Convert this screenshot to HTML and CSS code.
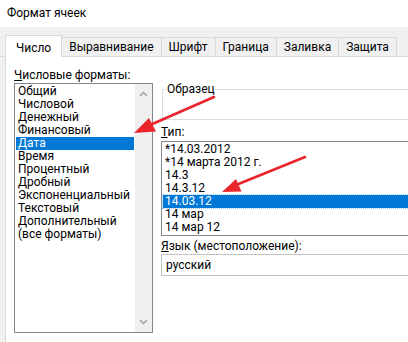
FILE: index.html
```html
<!DOCTYPE html>
<html lang="ru">
<head>
    <meta charset="UTF-8">
    <title>Формат ячеек</title>
    <link rel="stylesheet" href="styles.css">
</head>
<body>
    <div class="window">
        <div class="titlebar">Формат ячеек</div>

        <div class="tabs">
            <div class="tab active">Число</div>
            <div class="tab">Выравнивание</div>
            <div class="tab">Шрифт</div>
            <div class="tab">Граница</div>
            <div class="tab">Заливка</div>
            <div class="tab">Защита</div>
        </div>

        <div class="panel">
            <div class="col-left">
                <div class="label"><u>Ч</u>исловые форматы:</div>
                <div class="listbox formats">
                    <ul class="items">
                        <li>Общий</li>
                        <li>Числовой</li>
                        <li>Денежный</li>
                        <li>Финансовый</li>
                        <li class="selected">Дата</li>
                        <li>Время</li>
                        <li>Процентный</li>
                        <li>Дробный</li>
                        <li>Экспоненциальный</li>
                        <li>Текстовый</li>
                        <li>Дополнительный</li>
                        <li>(все форматы)</li>
                    </ul>
                    <div class="scrollbar">
                        <svg width="9" height="6" viewBox="0 0 9 6"><path d="M1 5 L4.5 1.5 L8 5" /></svg>
                        <svg width="9" height="6" viewBox="0 0 9 6"><path d="M1 1 L4.5 4.5 L8 1" /></svg>
                    </div>
                </div>
            </div>

            <div class="col-right">
                <fieldset class="sample">
                    <legend>Образец</legend>
                    <div class="sample-value"></div>
                </fieldset>

                <div class="label type-label"><u>Т</u>ип:</div>
                <ul class="listbox items types">
                    <li>*14.03.2012</li>
                    <li>*14 марта 2012 г.</li>
                    <li>14.3</li>
                    <li>14.3.12</li>
                    <li class="selected focused">14.03.12</li>
                    <li>14 мар</li>
                    <li>14 мар 12</li>
                </ul>

                <div class="label lang-label"><u>Я</u>зык (местоположение):</div>
                <div class="combo">русский</div>
            </div>
        </div>

        <!-- red pointer arrows drawn over the dialog -->
        <svg class="annotations" width="408" height="342" viewBox="0 0 408 342">
            <line x1="214" y1="97" x2="150" y2="125" />
            <polygon points="134,133 149,118 156,131.5" />
            <line x1="305" y1="157" x2="236" y2="185" />
            <polygon points="222,192 236,179 241.5,191.5" />
        </svg>
    </div>
</body>
</html>
```

FILE: styles.css
```css
body {
    margin: 0;
    font-family: Roboto, "Noto Sans", sans-serif;
    font-size: 12px;
    color: #000;
    background: #f0f0f0;
    overflow: hidden;
}
.window {
    position: relative;
    width: 408px;
    height: 342px;
    overflow: hidden;
}
.titlebar {
    height: 27px;
    line-height: 27px;
    padding-left: 7px;
    background: #fff;
}
.tabs {
    display: flex;
    align-items: flex-end;
    height: 29px;
    padding-left: 5px;
    border-bottom: 1px solid #d9d9d9;
}
.tab {
    height: 18px;
    line-height: 19px;
    padding: 0 7px;
    border-top: 1px solid #d9d9d9;
    border-right: 1px solid #d9d9d9;
    white-space: nowrap;
}
.tab.active {
    height: 21px;
    line-height: 24px;
    margin-bottom: -1px;
    padding: 0 10px;
    background: #fff;
    border-left: 1px solid #d9d9d9;
}
.panel {
    display: flex;
    gap: 8px;
    height: 285px;
    margin-left: 5px;
    padding: 11px 0 0 8px;
    background: #fff;
    border-left: 1px solid #d9d9d9;
}
.label {
    line-height: 15px;
    white-space: nowrap;
}
.col-left {
    width: 139px;
    flex-shrink: 0;
}
.listbox {
    border: 1px solid #828790;
}
.formats {
    display: flex;
    height: 248px;
}
.items {
    margin: 0;
    padding: 1px;
    list-style: none;
}
.formats .items {
    flex: 1;
}
.items li {
    height: 13px;
    line-height: 13px;
    padding-left: 2px;
    white-space: nowrap;
}
.items li.selected {
    background: #0078d7;
    color: #fff;
}
.items li.focused {
    outline: 1px dotted #9fc9f2;
}
.scrollbar {
    width: 17px;
    background: #f0f0f0;
    display: flex;
    flex-direction: column;
    justify-content: space-between;
    align-items: center;
    padding: 7px 0 7px;
}
.scrollbar path {
    fill: none;
    stroke: #a6a6a6;
    stroke-width: 1.6;
}
.col-right {
    width: 260px;
    flex-shrink: 0;
    margin-top: 14px;
}
.sample {
    margin: 0 0 0 1px;
    padding: 0;
    border: 1px solid #dcdcdc;
}
.sample legend {
    margin-left: 3px;
    padding: 0 1px;
    line-height: 15px;
}
.sample-value {
    height: 22px;
}
.type-label {
    margin-top: 5px;
}
.types {
    margin-top: 1px;
}
.lang-label {
    margin-top: 3px;
}
.combo {
    height: 20px;
    line-height: 20px;
    padding-left: 4px;
    border: 1px solid #c3c3c3;
}
.annotations {
    position: absolute;
    top: 0;
    left: 0;
    pointer-events: none;
}
.annotations line {
    stroke: #e9252c;
    stroke-width: 2.6;
    stroke-linecap: round;
}
.annotations polygon {
    fill: #e9252c;
}
```
